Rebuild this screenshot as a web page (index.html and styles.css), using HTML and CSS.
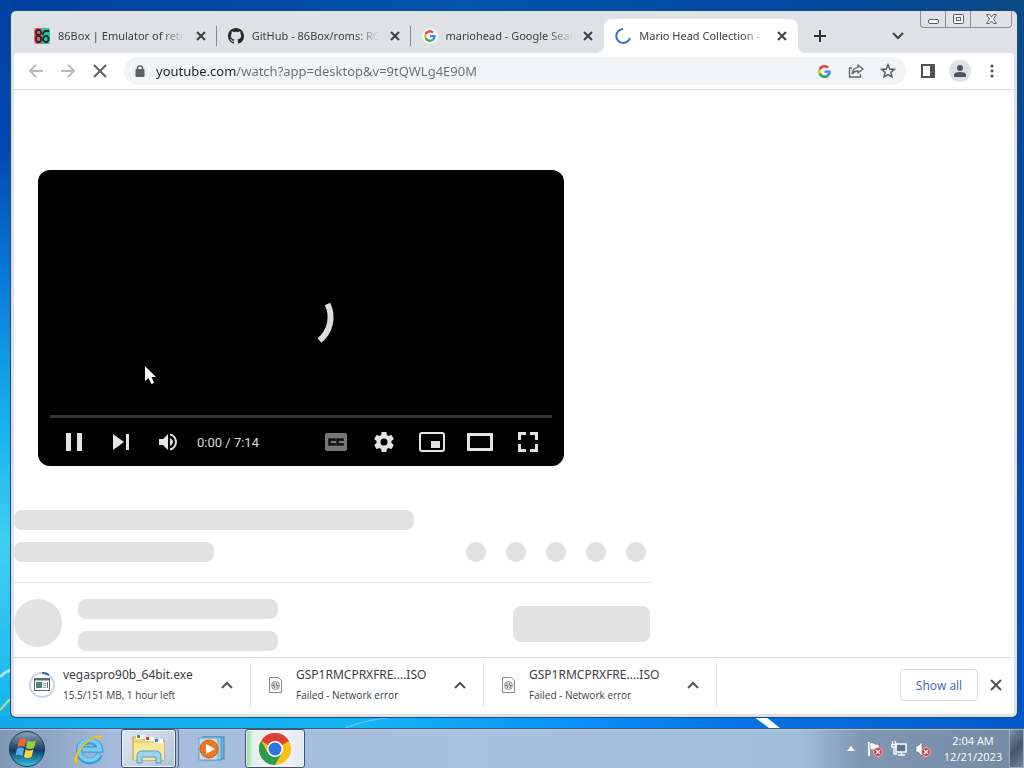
FILE: index.html
```html
<!DOCTYPE html>
<html lang="en">
<head>
    <meta charset="UTF-8">
    <meta name="viewport" content="width=device-width, initial-scale=1.0">
    <title>Mario Head Collection - YouTube</title>
    <link rel="stylesheet" href="styles.css">
</head>
<body>
    <div class="desktop">
        <svg class="wallpaper" viewBox="0 0 1024 728" preserveAspectRatio="none" aria-hidden="true">
            <path d="M0 677 Q6 671 12 670" fill="none" stroke="#a5e4fa" stroke-width="3"/>
            <path d="M0 710 L12 697" stroke="#b5e08a" stroke-width="2"/>
            <path d="M345 728 Q368 719 395 717" fill="none" stroke="#6fcffb" stroke-width="1"/>
            <path d="M754 717 L766 717 L780 728 L769 728 Z" fill="#fff"/>
        </svg>

        <div class="window">
            <header class="titlebar">
                <nav class="tabs">
                    <div class="tab">
                        <svg class="favicon" viewBox="0 0 16 16" aria-hidden="true">
                            <path d="M1 0 H8 V16 H1 L0 12 V3 Z" fill="#ee5a66"/>
                            <path d="M8 0 H15 L16 3 V13 L15 16 H8 Z" fill="#22c3a6"/>
                            <g fill="none" stroke="#26282a" stroke-width="1.800">
                                <rect x="2" y="2" width="5" height="5" rx="2"/>
                                <rect x="2" y="8" width="5" height="6" rx="2"/>
                                <path d="M15 3 H11 L9 5 V7 M9 10 L11 8 H13 L14.500 10 V12 L13 14 H11 L9 12 Z"/>
                            </g>
                        </svg>
                        <a class="tab-title" href="#">86Box | Emulator of retro</a>
                        <button class="tab-close" type="button" aria-label="Close tab"><svg viewBox="0 0 10 10"><path d="M1 1 L9 9 M9 1 L1 9"/></svg></button>
                    </div>
                    <div class="tab">
                        <svg class="favicon" viewBox="0 0 16 16" aria-hidden="true">
                            <path fill="#24292f" d="M8 0C3.58 0 0 3.58 0 8c0 3.54 2.29 6.53 5.47 7.59.4.07.55-.17.55-.38 0-.19-.01-.82-.01-1.49-2.01.37-2.53-.49-2.69-.94-.09-.23-.48-.94-.82-1.13-.28-.15-.68-.52-.01-.53.63-.01 1.08.58 1.23.82.72 1.21 1.87.87 2.33.66.07-.52.28-.87.51-1.07-1.78-.2-3.64-.89-3.64-3.95 0-.87.31-1.59.82-2.15-.08-.2-.36-1.02.08-2.12 0 0 .67-.21 2.2.82.64-.18 1.32-.27 2-.27s1.36.09 2 .27c1.53-1.04 2.2-.82 2.2-.82.44 1.1.16 1.92.08 2.12.51.56.82 1.27.82 2.15 0 3.07-1.87 3.75-3.65 3.95.29.25.54.73.54 1.48 0 1.07-.01 1.93-.01 2.2 0 .21.15.46.55.38A8.01 8.01 0 0 0 16 8c0-4.42-3.58-8-8-8z"/>
                        </svg>
                        <a class="tab-title" href="#">GitHub - 86Box/roms: RO</a>
                        <button class="tab-close" type="button" aria-label="Close tab"><svg viewBox="0 0 10 10"><path d="M1 1 L9 9 M9 1 L1 9"/></svg></button>
                    </div>
                    <div class="tab">
                        <svg class="favicon google-disc" viewBox="0 0 48 48" aria-hidden="true">
                            <path fill="#ea4335" d="M24 9.500c3.500 0 6.700 1.200 9.200 3.600l6.900-6.900C35.900 2.400 30.500 0 24 0 14.600 0 6.500 5.400 2.600 13.200l8 6.200C12.400 13.700 17.700 9.500 24 9.500z"/>
                            <path fill="#4285f4" d="M47 24.500c0-1.600-.2-3.100-.4-4.500H24v9h12.900c-.6 3-2.300 5.500-4.800 7.200l7.700 6C44.400 38 47 31.800 47 24.500z"/>
                            <path fill="#fbbc05" d="M10.500 28.600c-.5-1.500-.8-3-.8-4.600s.3-3.100.8-4.600l-8-6.200C.9 16.500 0 20.100 0 24s.9 7.500 2.600 10.800z"/>
                            <path fill="#34a853" d="M24 48c6.500 0 11.900-2.100 15.900-5.800l-7.700-6c-2.200 1.400-4.900 2.300-8.200 2.300-6.300 0-11.600-4.200-13.500-9.900l-8 6.200C6.500 42.600 14.600 48 24 48z"/>
                        </svg>
                        <a class="tab-title" href="#">mariohead - Google Sear</a>
                        <button class="tab-close" type="button" aria-label="Close tab"><svg viewBox="0 0 10 10"><path d="M1 1 L9 9 M9 1 L1 9"/></svg></button>
                    </div>
                    <div class="tab active">
                        <svg class="favicon" viewBox="0 0 16 16" aria-hidden="true">
                            <path d="M8 1 A7 7 0 1 0 15 10" fill="none" stroke="#3b6fc4" stroke-width="2"/>
                        </svg>
                        <a class="tab-title" href="#">Mario Head Collection -</a>
                        <button class="tab-close" type="button" aria-label="Close tab"><svg viewBox="0 0 10 10"><path d="M1 1 L9 9 M9 1 L1 9"/></svg></button>
                    </div>
                </nav>
                <button class="new-tab" type="button" aria-label="New tab">
                    <svg width="14" height="14" viewBox="0 0 14 14"><path d="M7 1 V13 M1 7 H13" stroke="#303236" stroke-width="2"/></svg>
                </button>
                <button class="tab-search" type="button" aria-label="Search tabs">
                    <svg width="12" height="8" viewBox="0 0 12 8"><path d="M1 1 L6 6 L11 1" fill="none" stroke="#3c4043" stroke-width="2"/></svg>
                </button>
                <div class="caption">
                    <button type="button" aria-label="Minimize">
                        <svg width="13" height="12" viewBox="0 0 13 12"><rect x="1.500" y="6.500" width="10" height="4" rx="1.500" fill="#f4f5f7" stroke="#5c6066"/></svg>
                    </button>
                    <button type="button" aria-label="Maximize">
                        <svg width="13" height="12" viewBox="0 0 13 12" fill="#f4f5f7" stroke="#5c6066"><rect x="1.500" y="1.500" width="10" height="9" rx="1"/><rect x="4.500" y="4.500" width="4" height="3"/></svg>
                    </button>
                    <button class="caption-close" type="button" aria-label="Close">
                        <svg width="13" height="12" viewBox="0 0 13 12"><path d="M1.500 1.500 H4.500 L6.500 4 L8.500 1.500 H11.500 L8.500 6 L11.500 10.500 H8.500 L6.500 8 L4.500 10.500 H1.500 L4.500 6 Z" fill="#f4f5f7" stroke="#5c6066"/></svg>
                    </button>
                </div>
            </header>

            <div class="toolbar">
                <button class="tool" type="button" aria-label="Back">
                    <svg width="16" height="16" viewBox="0 0 16 16"><path d="M15 8 H2 M8 2 L2 8 L8 14" fill="none" stroke="#b9bbbe" stroke-width="2"/></svg>
                </button>
                <button class="tool" type="button" aria-label="Forward">
                    <svg width="16" height="16" viewBox="0 0 16 16"><path d="M1 8 H14 M8 2 L14 8 L8 14" fill="none" stroke="#b9bbbe" stroke-width="2"/></svg>
                </button>
                <button class="tool" type="button" aria-label="Stop loading">
                    <svg width="14" height="14" viewBox="0 0 14 14"><path d="M1 1 L13 13 M13 1 L1 13" stroke="#5f6368" stroke-width="2"/></svg>
                </button>
                <div class="omnibox">
                    <svg class="lock" viewBox="0 0 10 12" aria-hidden="true"><path d="M2.500 5 V3 Q2.500 1 5 1 Q7.500 1 7.500 3 V5" fill="none" stroke="#5f6368" stroke-width="1.500"/><rect x="0.500" y="4" width="9" height="8" rx="1" fill="#5f6368"/></svg>
                    <input class="url" type="text" aria-label="Address" value="youtube.com/watch?app=desktop&amp;v=9tQWLg4E90M">
                    <button class="tool" type="button" aria-label="Search with Google">
                        <svg width="13" height="13" viewBox="0 0 48 48">
                            <path fill="#ea4335" d="M24 9.500c3.500 0 6.700 1.200 9.200 3.600l6.900-6.900C35.900 2.400 30.500 0 24 0 14.600 0 6.500 5.400 2.600 13.200l8 6.200C12.400 13.700 17.700 9.500 24 9.500z"/>
                            <path fill="#4285f4" d="M47 24.500c0-1.600-.2-3.100-.4-4.500H24v9h12.900c-.6 3-2.300 5.500-4.800 7.200l7.700 6C44.400 38 47 31.800 47 24.500z"/>
                            <path fill="#fbbc05" d="M10.500 28.600c-.5-1.500-.8-3-.8-4.600s.3-3.100.8-4.600l-8-6.200C.9 16.500 0 20.100 0 24s.9 7.500 2.600 10.800z"/>
                            <path fill="#34a853" d="M24 48c6.500 0 11.900-2.100 15.900-5.800l-7.700-6c-2.200 1.400-4.900 2.300-8.200 2.300-6.300 0-11.600-4.200-13.500-9.900l-8 6.200C6.500 42.600 14.600 48 24 48z"/>
                        </svg>
                    </button>
                    <button class="tool" type="button" aria-label="Share">
                        <svg width="16" height="16" viewBox="0 0 16 16" fill="none" stroke="#5f6368" stroke-width="1.300"><path d="M4 5 H1.500 V14 H12.500 V11"/><path d="M10 2 L15 6 L10 10 V8 Q6 8 4 11 Q4.500 5 10 4.300 Z"/></svg>
                    </button>
                    <button class="tool" type="button" aria-label="Bookmark">
                        <svg width="16" height="16" viewBox="0 0 16 16"><path d="M8 1.800 L9.800 6 L14.300 6.400 L10.900 9.400 L11.900 13.800 L8 11.500 L4.100 13.800 L5.100 9.400 L1.700 6.400 L6.200 6 Z" fill="none" stroke="#55595e" stroke-width="1.500"/></svg>
                    </button>
                </div>
                <button class="tool" type="button" aria-label="Side panel">
                    <svg width="14" height="14" viewBox="0 0 14 14"><path d="M1 1 H13 V13 H1 Z" fill="none" stroke="#505459" stroke-width="2"/><rect x="9" y="0" width="5" height="14" fill="#505459"/></svg>
                </button>
                <button class="tool profile" type="button" aria-label="Profile">
                    <svg width="22" height="22" viewBox="0 0 22 22"><circle cx="11" cy="11" r="11" fill="#dfe1e5"/><circle cx="11" cy="8" r="3" fill="#505459"/><path d="M5 17 V15 Q5 12 11 12 Q17 12 17 15 V17 Z" fill="#505459"/></svg>
                </button>
                <button class="tool" type="button" aria-label="Menu">
                    <svg width="4" height="14" viewBox="0 0 4 14" fill="#505459"><circle cx="2" cy="2" r="1.600"/><circle cx="2" cy="7" r="1.600"/><circle cx="2" cy="12" r="1.600"/></svg>
                </button>
            </div>

            <main class="page">
                <section class="player">
                    <svg class="spinner" viewBox="0 0 70 70" aria-hidden="true"><path d="M61.500 21 A30 30 0 0 1 53.500 57.500" fill="none" stroke="#ddd" stroke-width="6"/></svg>
                    <svg class="cursor" viewBox="0 0 12 19" aria-hidden="true"><path d="M0 0 V15 L3.500 12 L6.500 18 L9 17 L6.500 11 H11 Z" fill="#fff"/></svg>
                    <div class="progress"></div>
                    <div class="controls">
                        <button type="button" aria-label="Pause"><svg width="18" height="20" viewBox="0 0 18 20"><path d="M1 1 H6 V19 H1 Z M12 1 H17 V19 H12 Z" fill="#e4e4e4"/></svg></button>
                        <button type="button" aria-label="Next"><svg width="18" height="18" viewBox="0 0 18 18"><path d="M1 1 L12 9 L1 17 Z M14 1 H17 V17 H14 Z" fill="#e4e4e4"/></svg></button>
                        <button type="button" aria-label="Mute"><svg width="20" height="20" viewBox="0 0 20 20"><path d="M1 7 H5 L10 2 V18 L5 13 H1 Z" fill="#e4e4e4"/><path d="M12 6 Q15 7.500 15 10 Q15 12.500 12 14 Z" fill="#e4e4e4"/><path d="M12 2.500 A7.700 7.700 0 0 1 12 17.500" fill="none" stroke="#e4e4e4" stroke-width="2"/></svg></button>
                        <span class="time">0:00 / 7:14</span>
                        <button class="wide" type="button" aria-label="Subtitles"><svg width="22" height="18" viewBox="0 0 22 18"><rect width="22" height="18" rx="2" fill="#777"/><path d="M9.500 8 V6.500 H4.500 V11.500 H9.500 V10 M17.500 8 V6.500 H12.500 V11.500 H17.500 V10" fill="none" stroke="#111" stroke-width="2.400"/></svg></button>
                        <button class="wide" type="button" aria-label="Settings"><svg width="24" height="24" viewBox="0 0 24 24"><path fill="#e4e4e4" d="M19.430 12.980c.04-.32.07-.64.07-.98s-.03-.66-.07-.98l2.110-1.650c.19-.15.24-.42.12-.64l-2-3.460c-.12-.22-.39-.3-.61-.22l-2.490 1c-.52-.4-1.080-.73-1.690-.98l-.38-2.650A.488.488 0 0 0 14 2h-4c-.25 0-.46.18-.49.42l-.38 2.650c-.61.25-1.170.59-1.690.98l-2.490-1c-.23-.09-.49 0-.61.22l-2 3.460c-.13.22-.07.49.12.64l2.110 1.650c-.04.32-.07.65-.07.98s.03.66.07.98l-2.110 1.650c-.19.15-.24.42-.12.64l2 3.460c.12.22.39.3.61.22l2.490-1c.52.4 1.080.73 1.690.98l.38 2.650c.03.24.24.42.49.42h4c.25 0 .46-.18.49-.42l.38-2.650c.61-.25 1.170-.59 1.690-.98l2.490 1c.23.09.49 0 .61-.22l2-3.460c.12-.22.07-.49-.12-.64zM12 15.500a3.500 3.500 0 1 1 0-7 3.500 3.500 0 0 1 0 7z"/></svg></button>
                        <button class="wide" type="button" aria-label="Miniplayer"><svg width="26" height="20" viewBox="0 0 26 20"><rect x="1" y="1" width="24" height="18" rx="2" fill="none" stroke="#e4e4e4" stroke-width="2"/><rect x="12" y="9" width="9" height="7" fill="#e4e4e4"/></svg></button>
                        <button class="wide" type="button" aria-label="Theater mode"><svg width="26" height="18" viewBox="0 0 26 18"><rect x="1.500" y="1.500" width="23" height="15" fill="none" stroke="#e4e4e4" stroke-width="3"/></svg></button>
                        <button class="wide" type="button" aria-label="Full screen"><svg width="20" height="20" viewBox="0 0 20 20"><path d="M1.500 8 V1.500 H8 M12 1.500 H18.500 V8 M18.500 12 V18.500 H12 M8 18.500 H1.500 V12" fill="none" stroke="#e4e4e4" stroke-width="3"/></svg></button>
                    </div>
                </section>

                <section class="skeleton">
                    <div class="bar bar-title"></div>
                    <div class="info">
                        <div class="bar"></div>
                        <div class="dots"><i></i><i></i><i></i><i></i><i></i></div>
                    </div>
                    <div class="owner">
                        <div class="avatar"></div>
                        <div class="owner-lines">
                            <div class="bar"></div>
                            <div class="bar"></div>
                        </div>
                        <div class="subscribe"></div>
                    </div>
                </section>
            </main>

            <footer class="downloads">
                <div class="download">
                    <svg class="file-icon ring" viewBox="0 0 26 26" aria-hidden="true"><circle cx="13" cy="13" r="12" fill="#fff" stroke="#c9d3e6" stroke-width="2"/><path d="M13 1 A12 12 0 0 1 20 3" fill="none" stroke="#2f62b8" stroke-width="2"/><rect x="5.500" y="6.500" width="15" height="12" fill="#fff" stroke="#5e6670"/><path d="M5 7.500 H21" stroke="#5e6670" stroke-width="2"/><rect x="7" y="10" width="6" height="6" fill="#4f7f7a"/><path d="M14 11.500 H17 M14 13.500 H17 M14 15.500 H17" stroke="#99a"/><path d="M18.500 10 V16" stroke="#567ab8"/></svg>
                    <div class="file">
                        <a class="file-name" href="#">vegaspro90b_64bit.exe</a>
                        <span class="file-status">15.5/151 MB, 1 hour left</span>
                    </div>
                    <button class="more" type="button" aria-label="More options"><svg width="12" height="8" viewBox="0 0 12 8"><path d="M1 7 L6 2 L11 7"/></svg></button>
                </div>
                <div class="download">
                    <svg class="file-icon" viewBox="0 0 13 16" aria-hidden="true"><path d="M0.500 0.500 H9.500 L12.500 3.500 V15.500 H0.500 Z" fill="#fafafa" stroke="#8b8b8b"/><circle cx="6.500" cy="8.500" r="4" fill="#ddd" stroke="#999"/><path d="M5.500 6 L3.500 8.500 H5.500 V11 M7.500 11 L9.500 8.500 H7.500 V6" fill="none" stroke="#777"/></svg>
                    <div class="file">
                        <a class="file-name" href="#">GSP1RMCPRXFRE....ISO</a>
                        <span class="file-status">Failed - Network error</span>
                    </div>
                    <button class="more" type="button" aria-label="More options"><svg width="12" height="8" viewBox="0 0 12 8"><path d="M1 7 L6 2 L11 7"/></svg></button>
                </div>
                <div class="download">
                    <svg class="file-icon" viewBox="0 0 13 16" aria-hidden="true"><path d="M0.500 0.500 H9.500 L12.500 3.500 V15.500 H0.500 Z" fill="#fafafa" stroke="#8b8b8b"/><circle cx="6.500" cy="8.500" r="4" fill="#ddd" stroke="#999"/><path d="M5.500 6 L3.500 8.500 H5.500 V11 M7.500 11 L9.500 8.500 H7.500 V6" fill="none" stroke="#777"/></svg>
                    <div class="file">
                        <a class="file-name" href="#">GSP1RMCPRXFRE....ISO</a>
                        <span class="file-status">Failed - Network error</span>
                    </div>
                    <button class="more" type="button" aria-label="More options"><svg width="12" height="8" viewBox="0 0 12 8"><path d="M1 7 L6 2 L11 7"/></svg></button>
                </div>
                <button class="show-all" type="button">Show all</button>
                <button class="shelf-close" type="button" aria-label="Close downloads"><svg width="12" height="12" viewBox="0 0 12 12"><path d="M1 1 L11 11 M11 1 L1 11" stroke="#505459" stroke-width="2"/></svg></button>
            </footer>
        </div>
    </div>

    <div class="taskbar">
        <button class="start" type="button" aria-label="Start">
            <svg width="38" height="38" viewBox="0 0 38 38">
                <defs>
                    <linearGradient id="orb" x1="0" y1="0" x2="0" y2="1"><stop offset="0" stop-color="#8fa3b8"/><stop offset=".45" stop-color="#2b4c70"/><stop offset=".55" stop-color="#0f3f6e"/><stop offset="1" stop-color="#35c6ea"/></linearGradient>
                </defs>
                <circle cx="19" cy="19" r="17.500" fill="url(#orb)" stroke="#223b56"/>
                <path d="M11 10 Q15 7 18 9.500 L16.500 17 Q13 15 9.500 17 Z" fill="#f0642f"/>
                <path d="M19.500 10.500 Q23 12.500 28 10.500 L26 18 Q22 20 18 18 Z" fill="#9bcf3c"/>
                <path d="M9 18.500 Q12.500 16.500 16 18.500 L14.500 26 Q11 24 7.500 25.500 Z" fill="#54b0ee"/>
                <path d="M17.500 19.500 Q21.500 21.500 25.500 19.500 L23.500 27 Q20 29 16 27 Z" fill="#fbd335"/>
            </svg>
        </button>
        <button class="task" type="button" aria-label="Internet Explorer">
            <svg width="34" height="32" viewBox="0 0 34 32">
                <path d="M27.500 21.500 A10.500 10 0 1 1 28 16.500 H11" fill="none" stroke="#3a9ad6" stroke-width="6.500"/>
                <path d="M27 21.500 A10.500 10 0 1 1 28 16.500 H11" fill="none" stroke="#74cdf3" stroke-width="4"/>
                <path d="M4 30 Q-1 27 8 15 Q18 3 27 2 Q31 2 29 6 Q28 3 23 5 Q13 9 7 20 Q3 27 7 29 Z" fill="#f5c928" stroke="#d9a41b" stroke-width=".5"/>
            </svg>
        </button>
        <button class="task open stacked" type="button" aria-label="Windows Explorer">
            <svg width="34" height="32" viewBox="0 0 34 32">
                <path d="M1 4 H10 L12 7 H32 V27 H1 Z" fill="#f2d675" stroke="#c9a23c"/>
                <path d="M4 2 H13 V6 H4 Z" fill="#fff"/><path d="M5 2 H8 V5 H5 Z" fill="#3ba14b"/>
                <path d="M13 4 H22 V8 H13 Z" fill="#fff"/><path d="M14 4 H17 V7 H14 Z" fill="#d8402d"/>
                <path d="M22 6 H31 V10 H22 Z" fill="#fff"/><path d="M23 6 H26 V9 H23 Z" fill="#3d83cf"/>
                <path d="M2 10 H32 V27 H2 Z" fill="#fbe79c"/>
                <path d="M5 30 V24 Q5 18 10 18 H24 Q29 18 29 24 V30 H24 V24 H10 V30 Z" fill="#9fd5ef" stroke="#4c9cc6"/>
            </svg>
        </button>
        <button class="task" type="button" aria-label="Windows Media Player">
            <svg width="28" height="26" viewBox="0 0 28 26">
                <rect x="7" y="1" width="19" height="22" fill="#6fb3dd" stroke="#3c83b4"/>
                <rect x="4" y="1" width="19" height="23" fill="#a6d4ee" stroke="#4b92c0"/>
                <rect x="1" y="2" width="19" height="22" fill="#c4def0" stroke="#6a9dc4"/>
                <circle cx="11" cy="13" r="9" fill="#ee7720" stroke="#c95b14"/>
                <path d="M8 8 L17 13 L8 18 Z" fill="#fff"/>
            </svg>
        </button>
        <button class="task open current" type="button" aria-label="Google Chrome">
            <svg width="32" height="32" viewBox="0 0 32 32">
                <circle cx="16" cy="16" r="16" fill="#fbc116"/>
                <path d="M16 16 L2.140 8 A16 16 0 0 1 29.860 8 Z" fill="#dd4035"/>
                <path d="M16 8 H29.860 L16 12 Z" fill="#dd4035"/>
                <path d="M2.140 8 A16 16 0 0 0 16 32 L22.900 20 L16 16 L9 20 Z" fill="#2c9c4b"/>
                <circle cx="16" cy="16" r="8" fill="#fff"/>
                <circle cx="16" cy="16" r="6.500" fill="#2f74df"/>
            </svg>
        </button>
        <div class="tray">
            <button type="button" aria-label="Show hidden icons"><svg width="8" height="5" viewBox="0 0 8 5"><path d="M4 0 L8 5 H0 Z" fill="#fff"/></svg></button>
            <button type="button" aria-label="Action Center"><svg width="16" height="16" viewBox="0 0 16 16"><path d="M2 1 V15" stroke="#fff" stroke-width="2"/><path d="M3 2 Q6 1 8 3 Q10 4 12 3 V9 Q10 10 8 9 Q6 8 3 9 Z" fill="#fff" stroke="#465a70" stroke-width=".5"/><circle cx="11" cy="11" r="4.500" fill="#d33a34" stroke="#f2c2bf"/><path d="M9 9 L13 13 M13 9 L9 13" stroke="#fff" stroke-width="1.500"/></svg></button>
            <button type="button" aria-label="Network"><svg width="16" height="16" viewBox="0 0 16 16"><rect x="5" y="3" width="10" height="8" fill="#61748c" stroke="#fff" stroke-width="1.500"/><path d="M7 14 H14 M10.500 11 V14" stroke="#fff" stroke-width="1.500"/><path d="M1.500 0 V3 M4.500 0 V3 M1 3.500 H5 V6 H1 Z M3 6 V13 H6" fill="none" stroke="#fff" stroke-width="1.300"/></svg></button>
            <button type="button" aria-label="Volume muted"><svg width="16" height="16" viewBox="0 0 16 16"><path d="M1 5 H3 L7 1 V15 L3 11 H1 Z" fill="#fff" stroke="#465a70" stroke-width=".5"/><circle cx="11" cy="11" r="4.500" fill="#d33a34" stroke="#f2c2bf"/><path d="M9 9 L13 13 M13 9 L9 13" stroke="#fff" stroke-width="1.500"/></svg></button>
            <div class="clock">
                <time>2:04 AM</time>
                <time>12/21/2023</time>
            </div>
        </div>
        <button class="show-desktop" type="button" aria-label="Show desktop"></button>
    </div>
</body>
</html>
```

FILE: styles.css
```css
* {
    box-sizing: border-box;
}
body {
    font-family: "Noto Sans", "Open Sans", sans-serif;
    font-size: 11px;
    color: #3c4043;
    margin: 0;
    height: 100vh;
    min-height: 600px;
    display: flex;
    flex-direction: column;
    overflow: hidden;
}
button {
    display: flex;
    align-items: center;
    justify-content: center;
    flex: none;
    padding: 0;
    border: none;
    background: none;
    font-family: inherit;
    cursor: pointer;
}
a {
    color: inherit;
    text-decoration: none;
}
svg {
    display: block;
    flex: none;
}

/* desktop */
.desktop {
    position: relative;
    flex: 1;
    display: flex;
    min-height: 0;
    padding: 11px 7px 11px 11px;
    background:
        linear-gradient(90deg, #12a9ea, #14b4f5 35%, #0a93fb 55%, #0573e6 72%, #0359cc) bottom / 100% 12px no-repeat,
        linear-gradient(#0142a2, #0148b0 20%, #0a78d8 38%, #16b2ec 58%, #40cff5 75%, #12b2ec) left / 12px 100% no-repeat,
        linear-gradient(90deg, #0240a0, #0253ab 45%, #024a9e 80%, #0b4a86) top / 100% 12px no-repeat,
        linear-gradient(#0c4a85, #034a9c 30%, #0055c8);
}
.wallpaper {
    position: absolute;
    top: 0;
    left: 0;
    width: 100%;
    height: 100%;
}
.window {
    position: relative;
    flex: 1;
    min-width: 0;
    display: flex;
    flex-direction: column;
    background-color: #dee1e6;
    padding: 0 3px 3px;
    border-radius: 5px;
    box-shadow: 0 0 0 1px #1c4a78;
}

/* tab strip */
.titlebar {
    height: 42px;
    display: flex;
    align-items: flex-end;
    padding: 0 2px 0 9px;
}
.tabs {
    display: flex;
    flex: 0 1 775px;
    min-width: 0;
}
.tab {
    flex: 1;
    min-width: 0;
    height: 34px;
    display: flex;
    align-items: center;
    gap: 8px;
    padding: 0 9px 0 11px;
    position: relative;
}
.tab:nth-child(-n+2)::after {
    content: "";
    position: absolute;
    right: 0;
    top: 7px;
    width: 1px;
    height: 20px;
    background-color: #85888c;
}
.tab.active {
    background-color: #fff;
    border-radius: 8px 8px 0 0;
}
.tab.active::before,
.tab.active::after {
    content: "";
    position: absolute;
    bottom: 0;
    width: 8px;
    height: 8px;
}
.tab.active::before {
    left: -8px;
    background: radial-gradient(circle at 0 0, transparent 8px, #fff 8px);
}
.tab.active::after {
    right: -8px;
    background: radial-gradient(circle at 100% 0, transparent 8px, #fff 8px);
}
.favicon {
    width: 16px;
    height: 16px;
}
.google-disc {
    padding: 2px;
    border-radius: 50%;
    background-color: #f6f7f8;
}
.tab-title {
    flex: 1;
    min-width: 0;
    overflow: hidden;
    white-space: nowrap;
    line-height: 20px;
    -webkit-mask-image: linear-gradient(90deg, #000 80%, transparent);
    mask-image: linear-gradient(90deg, #000 80%, transparent);
}
.tab-close {
    width: 14px;
    height: 20px;
}
.tab-close svg {
    width: 10px;
    height: 10px;
    stroke: #3c4043;
    stroke-width: 2;
}
.new-tab {
    width: 28px;
    height: 34px;
    margin-left: 8px;
}
.tab-search {
    width: 28px;
    height: 34px;
    margin-left: auto;
}
.caption {
    display: flex;
    align-self: flex-start;
    margin-left: 8px;
    border: 1px solid #8b8f96;
    border-top: none;
    border-radius: 0 0 4px 4px;
}
.caption button {
    width: 25px;
    height: 16px;
    border-right: 1px solid #8b8f96;
}
.caption .caption-close {
    width: 40px;
    border-right: none;
}

/* toolbar */
.toolbar {
    height: 37px;
    display: flex;
    align-items: center;
    padding: 0 6px;
    background-color: #fff;
    border-bottom: 1px solid #dadce0;
    border-radius: 3px 3px 0 0;
}
.tool {
    width: 32px;
    height: 28px;
}
.omnibox {
    flex: 1;
    min-width: 0;
    height: 28px;
    display: flex;
    align-items: center;
    margin: 0 6px 0 8px;
    padding: 0 2px 0 11px;
    border-radius: 14px;
    background-color: #f1f3f4;
}
.lock {
    width: 10px;
    height: 12px;
    margin-right: 11px;
}
.url {
    flex: 1;
    min-width: 0;
    padding: 0;
    border: none;
    outline: none;
    font-family: inherit;
    font-size: 13px;
    line-height: 20px;
    color: #5f6368;
    /* host part darker than the path */
    background: linear-gradient(90deg, #202124 80px, #6a6e73 80px);
    -webkit-background-clip: text;
    background-clip: text;
    -webkit-text-fill-color: transparent;
}

/* page */
.page {
    flex: 1;
    min-height: 0;
    overflow: hidden;
    background-color: #fff;
    padding-top: 80px;
}
.player {
    position: relative;
    max-width: 526px;
    height: 296px;
    margin: 0 24px 44px;
    padding: 0 12px;
    display: flex;
    flex-direction: column;
    justify-content: flex-end;
    background-color: #000;
    border-radius: 12px;
}
.spinner {
    position: absolute;
    top: 50%;
    left: 50%;
    width: 70px;
    height: 70px;
    margin: -35px;
}
.cursor {
    position: absolute;
    left: 107px;
    top: 196px;
    width: 12px;
    height: 19px;
}
.progress {
    height: 3px;
    background-color: #333;
}
.controls {
    height: 48px;
    display: flex;
    align-items: center;
}
.controls button {
    width: 47px;
    height: 48px;
}
.controls .wide {
    width: 48px;
}
.time {
    flex: 1;
    padding-left: 6px;
    font-family: Roboto, sans-serif;
    font-size: 13px;
    color: #ddd;
}

/* placeholders */
.skeleton {
    max-width: 638px;
}
.bar {
    width: 200px;
    height: 20px;
    border-radius: 8px;
    background-color: #e2e2e2;
}
.bar-title {
    width: 400px;
}
.info {
    display: flex;
    justify-content: space-between;
    padding: 12px 6px 20px 0;
    border-bottom: 1px solid #e8e8e8;
}
.dots {
    display: flex;
    gap: 20px;
}
.dots i {
    width: 20px;
    height: 20px;
    border-radius: 50%;
    background-color: #e2e2e2;
}
.owner {
    display: flex;
    gap: 16px;
    padding: 16px 2px 0 0;
}
.avatar {
    width: 48px;
    height: 48px;
    border-radius: 50%;
    background-color: #e2e2e2;
}
.owner-lines {
    display: grid;
    gap: 12px;
}
.subscribe {
    width: 137px;
    height: 36px;
    margin: 7px 0 0 auto;
    border-radius: 8px;
    background-color: #e2e2e2;
}

/* download shelf */
.downloads {
    height: 57px;
    display: flex;
    align-items: center;
    padding-bottom: 2px;
    background-color: #fff;
    border-top: 1px solid #dadce0;
    border-radius: 0 0 3px 3px;
}
.download {
    width: 233px;
    height: 44px;
    display: flex;
    align-items: center;
    padding: 0 10px 0 18px;
    border-right: 1px solid #dadce0;
}
.download:first-child {
    width: 237px;
    padding-left: 15px;
}
.file-icon {
    width: 13px;
    height: 16px;
    margin-right: 14px;
}
.file-icon.ring {
    width: 26px;
    height: 26px;
    margin-right: 8px;
}
.file {
    flex: 1;
    min-width: 0;
    display: flex;
    flex-direction: column;
    white-space: nowrap;
}
.file-name {
    font-size: 12px;
    line-height: 20px;
}
.file-status {
    font-family: "Open Sans", sans-serif;
    font-size: 10px;
    line-height: 20px;
}
.more {
    width: 26px;
    height: 28px;
}
.more svg {
    fill: none;
    stroke: #505459;
    stroke-width: 2;
}
.show-all {
    width: 78px;
    height: 32px;
    margin-left: auto;
    border: 1px solid #dadce0;
    border-radius: 4px;
    font-family: "Open Sans", sans-serif;
    font-size: 12px;
    font-weight: 500;
    color: #3564bb;
}
.shelf-close {
    width: 36px;
    height: 32px;
}

/* taskbar */
.taskbar {
    height: 40px;
    display: flex;
    align-items: stretch;
    border-top: 1px solid #3a5f85;
    box-shadow: inset 0 1px #b7c8de;
    background: linear-gradient(90deg, #8199b6, #8fa6c6 5%, #a5bcdc 11%, #a9c1de 45%, #a3bedd 78%, #8097b3 84%, #768aa3);
}
.start {
    width: 54px;
}
.task {
    width: 58px;
    margin-left: 4px;
}
.start + .task {
    margin-left: 6px;
}
.task.open {
    border: 1px solid #40536c;
    border-radius: 3px;
    background: linear-gradient(135deg, #dfe7f1, #b4c5da);
    box-shadow: inset 0 0 0 1px #eef3f9;
}
.task.stacked {
    width: 55px;
    box-shadow: inset 0 0 0 1px #eef3f9, 2px 0 #a9bdd6, 3px 0 #54677f;
    margin: 0 3px 0 3px;
}
.task.current {
    width: 60px;
    background: linear-gradient(90deg, #7be08e, #e6efef 12%, #f2f5f9 60%, #e3e9f1);
}
.tray {
    margin-left: auto;
    display: flex;
    align-items: center;
}
.tray button {
    width: 24px;
    height: 32px;
}
.clock {
    width: 72px;
    margin-left: 2px;
    display: flex;
    flex-direction: column;
    align-items: center;
    font-family: "Open Sans", sans-serif;
    font-size: 11px;
    line-height: 16px;
    color: #fff;
}
.show-desktop {
    width: 15px;
    border: 1px solid #a4b3c4;
    background: linear-gradient(135deg, #7e8fa3, #44566b 50%, #73859a);
}
```
